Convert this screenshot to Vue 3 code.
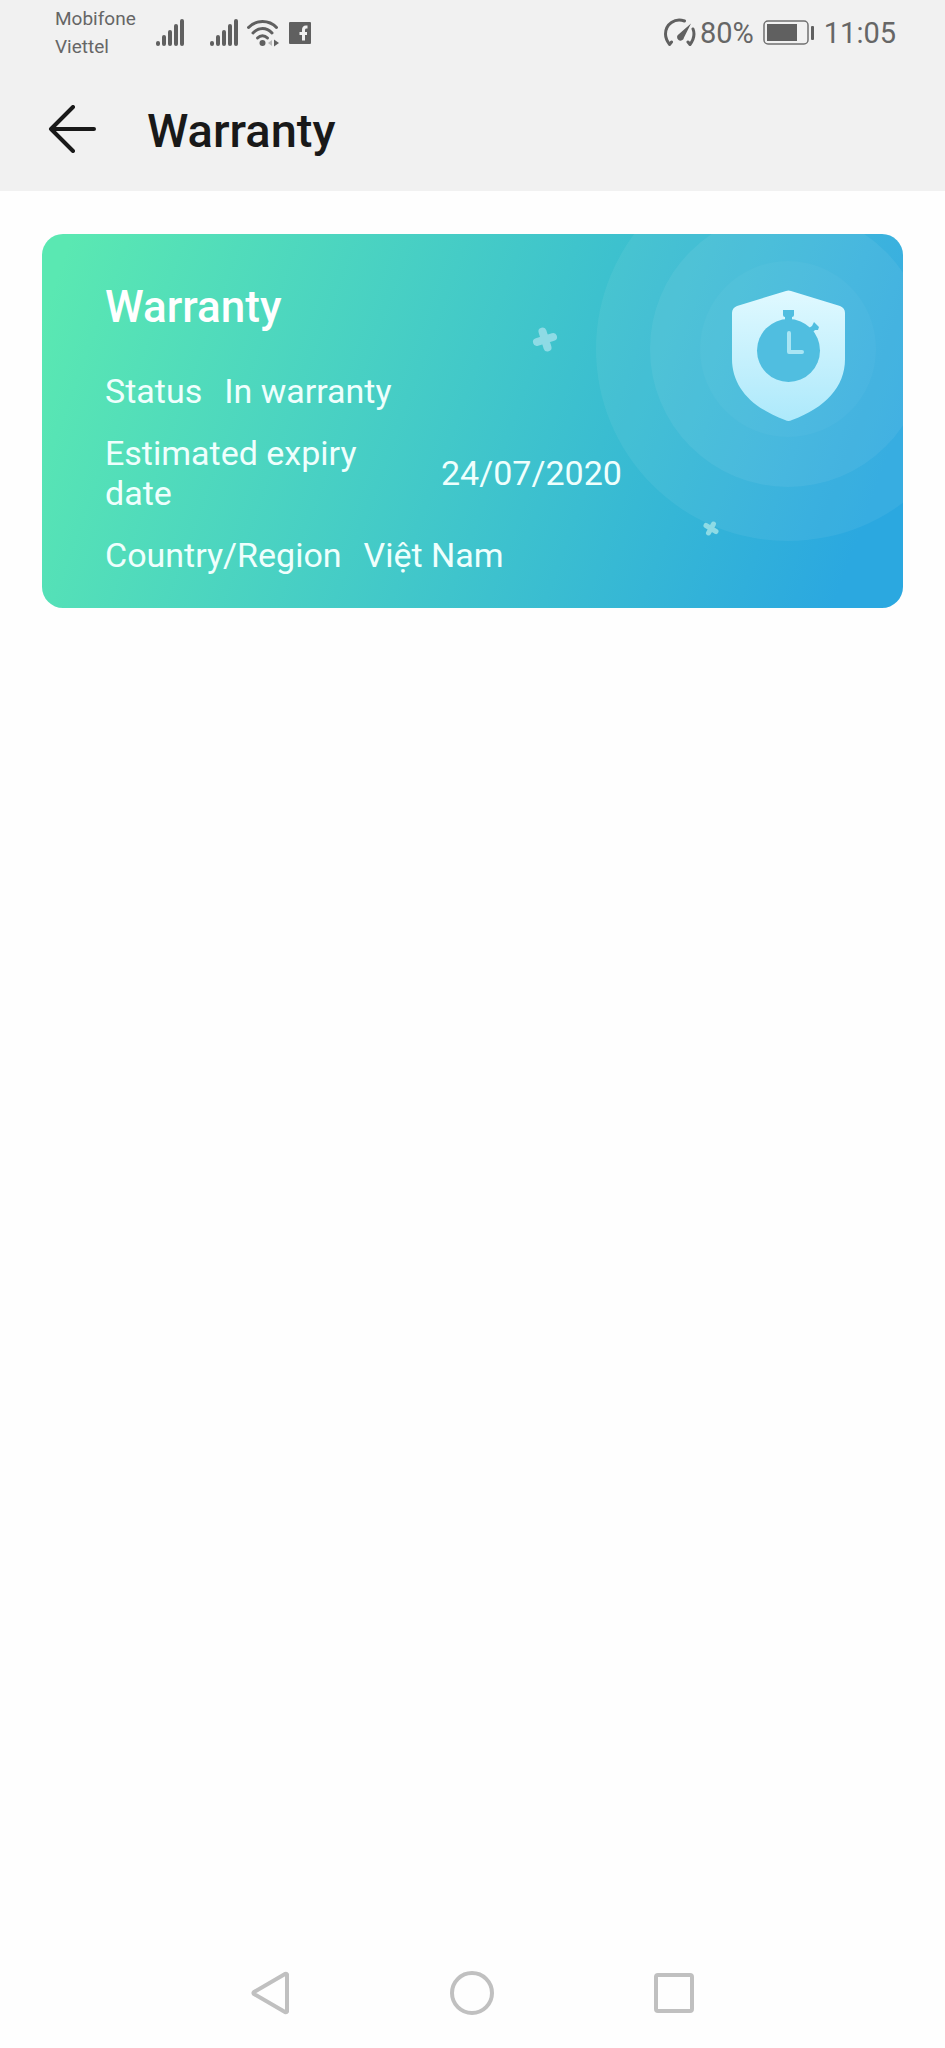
<script setup>
const carriers = ['Mobifone', 'Viettel']
const bars = [
  { x: 2, top: 24 },
  { x: 8, top: 18 },
  { x: 14, top: 13 },
  { x: 20, top: 7 },
  { x: 26, top: 2 }
]
const details = [
  { label: 'Status', value: 'In warranty' },
  { label: 'Estimated expiry date', value: '24/07/2020' },
  { label: 'Country/Region', value: 'Việt Nam' }
]
</script>

<template>
  <div class="screen">
    <header class="top">
      <div class="status-bar">
        <div class="carriers">
          <span v-for="name in carriers" :key="name">{{ name }}</span>
        </div>
        <svg v-for="n in 2" :key="n" class="signal" viewBox="0 0 30 28" aria-hidden="true">
          <path v-for="bar in bars" :key="bar.x" :d="`M${bar.x} 25V${bar.top}`" />
        </svg>
        <svg class="wifi" viewBox="0 0 34 28" aria-hidden="true">
          <g fill="none" stroke="#606060" stroke-width="3" stroke-linecap="round">
            <path d="M2.500 8.500C10 .5 23 .5 30.500 8.500" />
            <path d="M7 14C12.500 8 20.500 8 26 14" />
            <path d="M11.500 19C14.500 16 18.500 16 21.500 19" />
          </g>
          <circle cx="16.500" cy="24" r="3" fill="#606060" />
          <path d="M26 21v6l-4-3z" fill="#b8b8b8" />
          <path d="M28 20.500v7l5-3.500z" fill="#606060" />
        </svg>
        <svg class="social" viewBox="0 0 22 22" aria-hidden="true">
          <rect width="22" height="22" rx="1" fill="#606060" />
          <path d="M18.500 5h-1.500q-2.500 0-2.500 3V18.500M10.500 11.500H18" fill="none" stroke="#f1f1f1" stroke-width="3" />
        </svg>
        <div class="status-right">
          <svg class="gauge" viewBox="0 0 32 30" aria-hidden="true">
            <g fill="none" stroke="#606060" stroke-linecap="round" stroke-linejoin="round">
              <path d="M20.500 3C11-.5 1.500 6 1.500 16c0 4 1.500 7 4 10.500l2-2.500" stroke-width="3" />
              <path d="M29 11c2 5 1 10-3 15.500L24 24" stroke-width="3" />
            </g>
            <path d="M27 5.500L20 19.500a3.500 3.500 0 1 1-5-3.500z" fill="#606060" />
          </svg>
          <span>80%</span>
          <svg class="battery" viewBox="0 0 52 26" aria-hidden="true">
            <rect x="1" y="1" width="44" height="23" rx="4" fill="none" stroke="#707070" stroke-width="1.500" />
            <rect x="4" y="4" width="30" height="17" fill="#606060" />
            <rect x="48" y="6" width="3" height="14" rx="1" fill="#606060" />
          </svg>
          <time>11:05</time>
        </div>
      </div>
      <div class="app-bar">
        <button class="back" type="button" aria-label="Back">
          <svg viewBox="0 0 48 48" aria-hidden="true">
            <path d="M25 2L3 24l22 22M3 24h43" />
          </svg>
        </button>
        <h1>Warranty</h1>
      </div>
    </header>

    <main>
      <section class="card" aria-labelledby="card-title">
        <svg class="art" viewBox="0 0 400 375" aria-hidden="true">
          <defs>
            <linearGradient id="shield-fill" x1="0" y1="0" x2="0" y2="1">
              <stop offset="0" stop-color="#e0f9ff" />
              <stop offset="1" stop-color="#ade9fb" />
            </linearGradient>
          </defs>
          <g fill="#fff" fill-opacity=".06">
            <circle cx="285" cy="115" r="192" />
            <circle cx="285" cy="115" r="138" />
            <circle cx="285" cy="115" r="88" fill-opacity=".03" />
          </g>
          <path
            fill="url(#shield-fill)"
            d="M283 57q2.500-1 5 0l49 15q5 2 5 7v46c0 28-20 49-53 61q-3.500 2-7 0c-33-12-53-33-53-61V79q0-5 5-7z"
          />
          <g fill="#50bee0">
            <circle cx="285.500" cy="116.500" r="31.500" />
            <path d="M280 76h11v5q0 2-2 2v4h-7v-4q-2 0-2-2z" />
            <path d="M311 88l5 5-1 3h-3l-2 2-4-4 3-2z" />
          </g>
          <path d="M286 99v19h13" fill="none" stroke="#a9e5f4" stroke-width="4" stroke-linecap="round" stroke-linejoin="round" />
          <g fill="none" stroke="#8edbe5" stroke-linecap="round">
            <path d="M39.500 97.500l5 16M34 108l16-5" stroke-width="8" />
            <path d="M210.500 290l-5 9M203 291.500l10 6" stroke-width="5" />
          </g>
        </svg>
        <h2 id="card-title">Warranty</h2>
        <dl>
          <div v-for="item in details" :key="item.label" class="row">
            <dt>{{ item.label }}</dt>
            <dd>{{ item.value }}</dd>
          </div>
        </dl>
      </section>
    </main>

    <nav class="nav-bar" aria-label="System navigation">
      <button type="button" aria-label="Back">
        <svg viewBox="0 0 44 44" aria-hidden="true"><path d="M38 3.500v37q-.5 1-2 .5L5 23q-1-1 0-2L36 3q1.500-.5 2 .5z" /></svg>
      </button>
      <button type="button" aria-label="Home">
        <svg viewBox="0 0 44 44" aria-hidden="true"><circle cx="22" cy="22" r="20" /></svg>
      </button>
      <button type="button" aria-label="Recent apps">
        <svg viewBox="0 0 44 44" aria-hidden="true"><rect x="4" y="4" width="36" height="36" rx="2" /></svg>
      </button>
    </nav>
  </div>
</template>

<style>
body {
  margin: 0;
  background: #fefefe;
}
</style>

<style scoped>
.screen {
  display: flex;
  flex-direction: column;
  min-height: 100vh;
  font-family: Roboto, "Noto Sans", sans-serif;
}

svg {
  display: block;
  flex: none;
}

button {
  padding: 0;
  border: 0;
  background: none;
  cursor: pointer;
}

.top {
  background: #f1f1f1;
}

.status-bar {
  display: flex;
  align-items: center;
  height: 66px;
  padding: 0 49px 0 55px;
  color: #666;
}

.carriers {
  display: flex;
  flex-direction: column;
  font-size: 19px;
  line-height: 28px;
}

.signal {
  width: 30px;
  height: 28px;
  margin-left: 20px;
}

.signal + .signal {
  margin-left: 24px;
}

.signal path {
  fill: none;
  stroke: #606060;
  stroke-width: 4;
  stroke-linecap: round;
}

.wifi {
  width: 34px;
  height: 28px;
  margin-left: 6px;
}

.social {
  width: 22px;
  height: 22px;
  margin-left: 9px;
}

.status-right {
  display: flex;
  align-items: center;
  margin-left: auto;
  font-size: 29px;
  line-height: 40px;
}

.gauge {
  width: 32px;
  height: 30px;
  margin-right: 4px;
}

.battery {
  width: 52px;
  height: 26px;
  margin: 0 9px;
}

.app-bar {
  display: flex;
  align-items: center;
  gap: 51px;
  height: 125px;
  padding: 0 48px;
}

.back svg {
  width: 48px;
  height: 48px;
  fill: none;
  stroke: #191919;
  stroke-width: 4;
  stroke-linecap: round;
  stroke-linejoin: round;
}

h1 {
  margin: 0;
  padding-top: 4px;
  color: #191919;
  font-size: 47px;
  font-weight: 500;
  line-height: 60px;
}

main {
  flex: 1;
  padding: 43px 42px;
}

.card {
  position: relative;
  overflow: hidden;
  padding: 43px 63px 33px;
  border-radius: 21px;
  background: linear-gradient(110deg, #5ae8b2 3%, #3fc4cc 54%, #2ba8e0 93%);
  color: #effffd;
}

.art {
  position: absolute;
  top: 0;
  right: 0;
  width: 400px;
  height: 375px;
}

h2 {
  position: relative;
  margin: 0 0 34px;
  color: #fff;
  font-size: 44px;
  font-weight: 500;
  line-height: 60px;
}

dl {
  position: relative;
  display: flex;
  flex-direction: column;
  gap: 22px;
  margin: 0;
  font-size: 34px;
  line-height: 40px;
}

.row {
  display: flex;
  align-items: center;
  gap: 22px;
}

dt {
  max-width: 314px;
}

dd {
  margin: 0;
}

.nav-bar {
  display: grid;
  grid-template-columns: repeat(3, 1fr);
  height: 110px;
  padding: 0 18%;
}

.nav-bar button {
  display: grid;
  place-items: center;
}

.nav-bar svg {
  width: 44px;
  height: 44px;
  fill: none;
  stroke: #c0c0c0;
  stroke-width: 4;
  stroke-linejoin: round;
}
</style>
